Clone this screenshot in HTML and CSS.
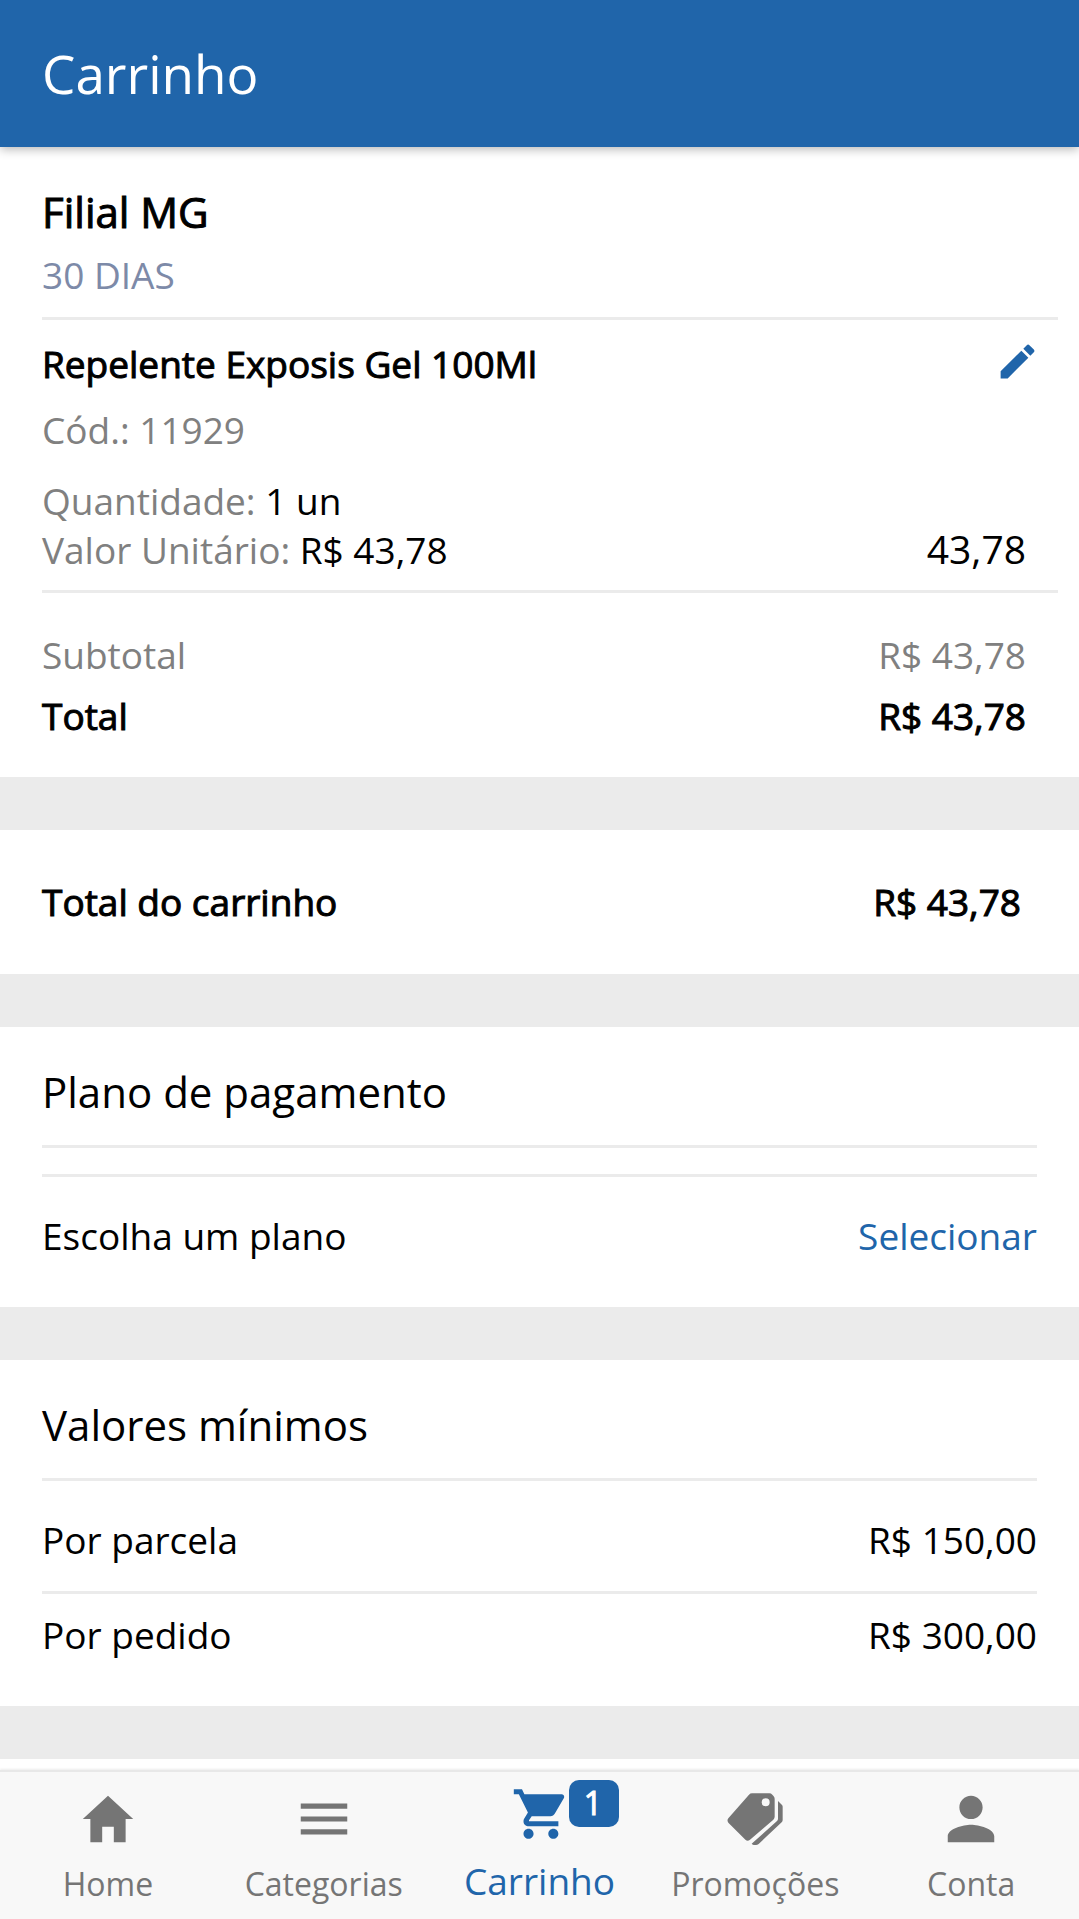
FILE: index.html
```html
<!DOCTYPE html>
<html lang="pt-BR">
<head>
<meta charset="utf-8">
<meta name="viewport" content="width=device-width, initial-scale=1">
<title>Carrinho</title>
<link rel="stylesheet" href="styles.css">
</head>
<body>
<header class="app-bar">
  <h1 class="app-title">Carrinho</h1>
</header>

<main class="content">
  <section class="order">
    <div class="branch">
      <h2 class="heading strong">Filial MG</h2>
      <p class="term">30 DIAS</p>
    </div>
    <article class="product">
      <div class="product-top">
        <h3 class="product-name strong">Repelente Exposis Gel 100Ml</h3>
        <button class="edit" type="button" aria-label="Editar item">
          <svg viewBox="0 0 512 512" aria-hidden="true"><path d="M64 368v80h80l235.727-235.729-79.999-79.998L64 368zm377.602-217.602c8.531-8.531 8.531-21.334 0-29.865l-50.135-50.135c-8.531-8.531-21.334-8.531-29.865 0l-39.468 39.469 79.999 79.998 39.469-39.467z"/></svg>
        </button>
      </div>
      <p class="muted code">Cód.: 11929</p>
      <p><span class="muted">Quantidade:</span> 1 un</p>
      <div class="row">
        <p><span class="muted">Valor Unitário:</span> R$ 43,78</p>
        <p class="line-total">43,78</p>
      </div>
    </article>
    <dl class="sums">
      <div class="row muted"><dt>Subtotal</dt><dd>R$ 43,78</dd></div>
      <div class="row strong"><dt>Total</dt><dd>R$ 43,78</dd></div>
    </dl>
  </section>

  <section class="cart-total row strong">
    <p>Total do carrinho</p>
    <p>R$ 43,78</p>
  </section>

  <section class="panel">
    <h2 class="heading panel-title">Plano de pagamento</h2>
    <div class="plan row">
      <p>Escolha um plano</p>
      <button class="select" type="button">Selecionar</button>
    </div>
  </section>

  <section class="panel">
    <h2 class="heading panel-title">Valores mínimos</h2>
    <dl>
      <div class="row minimum"><dt>Por parcela</dt><dd>R$ 150,00</dd></div>
      <div class="row minimum last"><dt>Por pedido</dt><dd>R$ 300,00</dd></div>
    </dl>
  </section>

  <section class="rest"></section>
</main>

<nav class="tabs" aria-label="Principal">
  <a class="tab" href="#home">
    <svg viewBox="0 0 512 512" aria-hidden="true"><path d="M208 448V320h96v128h97.6V256H464L256 64 48 256h62.4v192z"/></svg>
    <span>Home</span>
  </a>
  <a class="tab" href="#categorias">
    <svg viewBox="0 0 512 512" aria-hidden="true"><path d="M64 384h384v-42.666H64V384zm0-106.666h384v-42.667H64v42.667zM64 128v42.665h384V128H64z"/></svg>
    <span>Categorias</span>
  </a>
  <a class="tab active" href="#carrinho" aria-current="page">
    <svg viewBox="0 0 512 512" aria-hidden="true"><path d="M169.6 377.6c-22.882 0-41.6 18.718-41.6 41.601 0 22.882 18.718 41.6 41.6 41.6s41.601-18.718 41.601-41.6c-.001-22.884-18.72-41.601-41.601-41.601zM48 51.2v41.6h41.6l74.883 151.682-31.308 50.954c-3.118 5.2-5.2 12.482-5.2 19.765 0 27.85 19.025 41.6 44.825 41.6H416v-40H177.893c-3.118 0-5.2-2.082-5.2-5.2 0-1.036 2.207-5.2 2.207-5.2l20.782-32.8h154.954c15.601 0 29.128-8.317 36.4-21.836l74.882-128.8c1.237-2.461 2.082-6.246 2.082-10.4 0-11.446-9.364-19.765-20.8-19.765H135.364L115.6 51.2H48zm326.399 326.4c-22.882 0-41.6 18.718-41.6 41.601 0 22.882 18.718 41.6 41.6 41.6S416 442.082 416 419.2c0-22.883-18.719-41.6-41.601-41.6z"/></svg>
    <span>Carrinho</span>
    <span class="badge strong">1</span>
  </a>
  <a class="tab" href="#promocoes">
    <svg viewBox="0 0 186 186" aria-hidden="true"><path fill-rule="evenodd" d="M84 16H136Q141 16 145 20L149 25Q152 28 152 33V86Q152 91 148 95L78 155Q71 161 65 156L13 104Q8 97 13 91L75 20Q79 16 84 16ZM125 31a12 12 0 1 0 0 24a12 12 0 1 0 0-24Z"/><path d="M162 39L174 51Q176 53 176 56V96Q176 100 173 103L104 168Q100 171 96 171H89Q85 170 83 167L159 99Q162 96 162 92Z"/></svg>
    <span>Promoções</span>
  </a>
  <a class="tab" href="#conta">
    <svg viewBox="0 0 512 512" aria-hidden="true"><path d="M256 256c52.805 0 96-43.201 96-96s-43.195-96-96-96-96 43.201-96 96 43.195 96 96 96zm0 48c-63.598 0-192 32.402-192 96v48h384v-48c0-63.598-128.402-96-192-96z"/></svg>
    <span>Conta</span>
  </a>
</nav>
</body>
</html>
```
FILE: styles.css
```css
:root {
  --blue: #2065aa;
  --line: #ebebeb;
  --gutter: 42px;
}

* { box-sizing: border-box; }

body, h1, h2, h3, p, dl, dd { margin: 0; }

body {
  display: flex;
  flex-direction: column;
  min-height: 100vh;
  background: #fff;
  color: #000;
  font: 400 37px/49px "Open Sans", "Noto Sans", sans-serif;
}

h1, h2, h3 { font-weight: 400; }

button {
  padding: 0;
  border: 0;
  background: none;
  color: var(--blue);
  font: inherit;
}

svg { display: block; fill: currentColor; }

.strong { -webkit-text-stroke: 1px currentColor; }
.muted { color: #808080; }
.heading { font-size: 42px; line-height: 57px; }

.row {
  display: flex;
  justify-content: space-between;
}

/* top bar */
.app-bar {
  position: relative;
  padding: 38px var(--gutter) 37px;
  background: var(--blue);
  color: #fff;
  box-shadow: 0 2px 10px rgba(0, 0, 0, 0.3);
}

.app-title { font-size: 53px; line-height: 72px; }

/* sections, split by grey bands */
.content {
  flex: 1;
  display: flex;
  flex-direction: column;
  gap: 53px;
  background: var(--line);
}

.content > section { background: #fff; }

.order { padding: 36px 21px 37px var(--gutter); }

.branch {
  padding-bottom: 18px;
  border-bottom: 3px solid var(--line);
}

.term { margin-top: 10px; color: #7d8aa8; }

.product {
  padding: 19px 0 16px;
  border-bottom: 3px solid var(--line);
}

.product-top {
  display: flex;
  align-items: flex-start;
  justify-content: space-between;
  padding-right: 18px;
}

.product-name { font-size: 37px; }
.edit svg { width: 45px; height: 45px; }
.code { margin: 17px 0 22px; }
.line-total { padding-right: 32px; font-size: 39px; line-height: 47px; }

.sums {
  display: grid;
  gap: 12px;
  padding: 37px 32px 0 0;
}

.cart-total { padding: 47px 58px 48px var(--gutter); }

.panel { padding: 36px var(--gutter) 47px; }

.panel-title {
  padding-bottom: 25px;
  border-bottom: 3px solid var(--line);
}

.plan {
  margin-top: 26px;
  padding-top: 34px;
  border-top: 3px solid var(--line);
}

.minimum {
  padding: 34px 0 27px;
  border-bottom: 3px solid var(--line);
}

.last { padding: 16px 0 0; border: 0; }

.rest { flex: 1; }

/* bottom tabs */
.tabs {
  position: sticky;
  bottom: 0;
  display: grid;
  grid-template-columns: repeat(5, 1fr);
  border-top: 2px solid #e8e8e8;
  background: #f8f8f8;
  box-shadow: 0 -1px 2px rgba(0, 0, 0, 0.08);
}

.tab {
  position: relative;
  display: flex;
  flex-direction: column;
  align-items: center;
  gap: 12px;
  padding: 16px 0 13px;
  color: #757575;
  font-size: 32px;
  line-height: 44px;
  text-decoration: none;
}

.tab svg { width: 62px; height: 62px; }

.active {
  gap: 11px;
  padding-top: 11px;
  color: var(--blue);
  font-size: 37px;
  line-height: 49px;
}

.badge {
  position: absolute;
  top: 8px;
  left: calc(50% + 30px);
  width: 50px;
  padding: 1px 3px 2px 0;
  border-radius: 10px;
  background: var(--blue);
  color: #fff;
  font-size: 32px;
  line-height: 44px;
  text-align: center;
}
```
